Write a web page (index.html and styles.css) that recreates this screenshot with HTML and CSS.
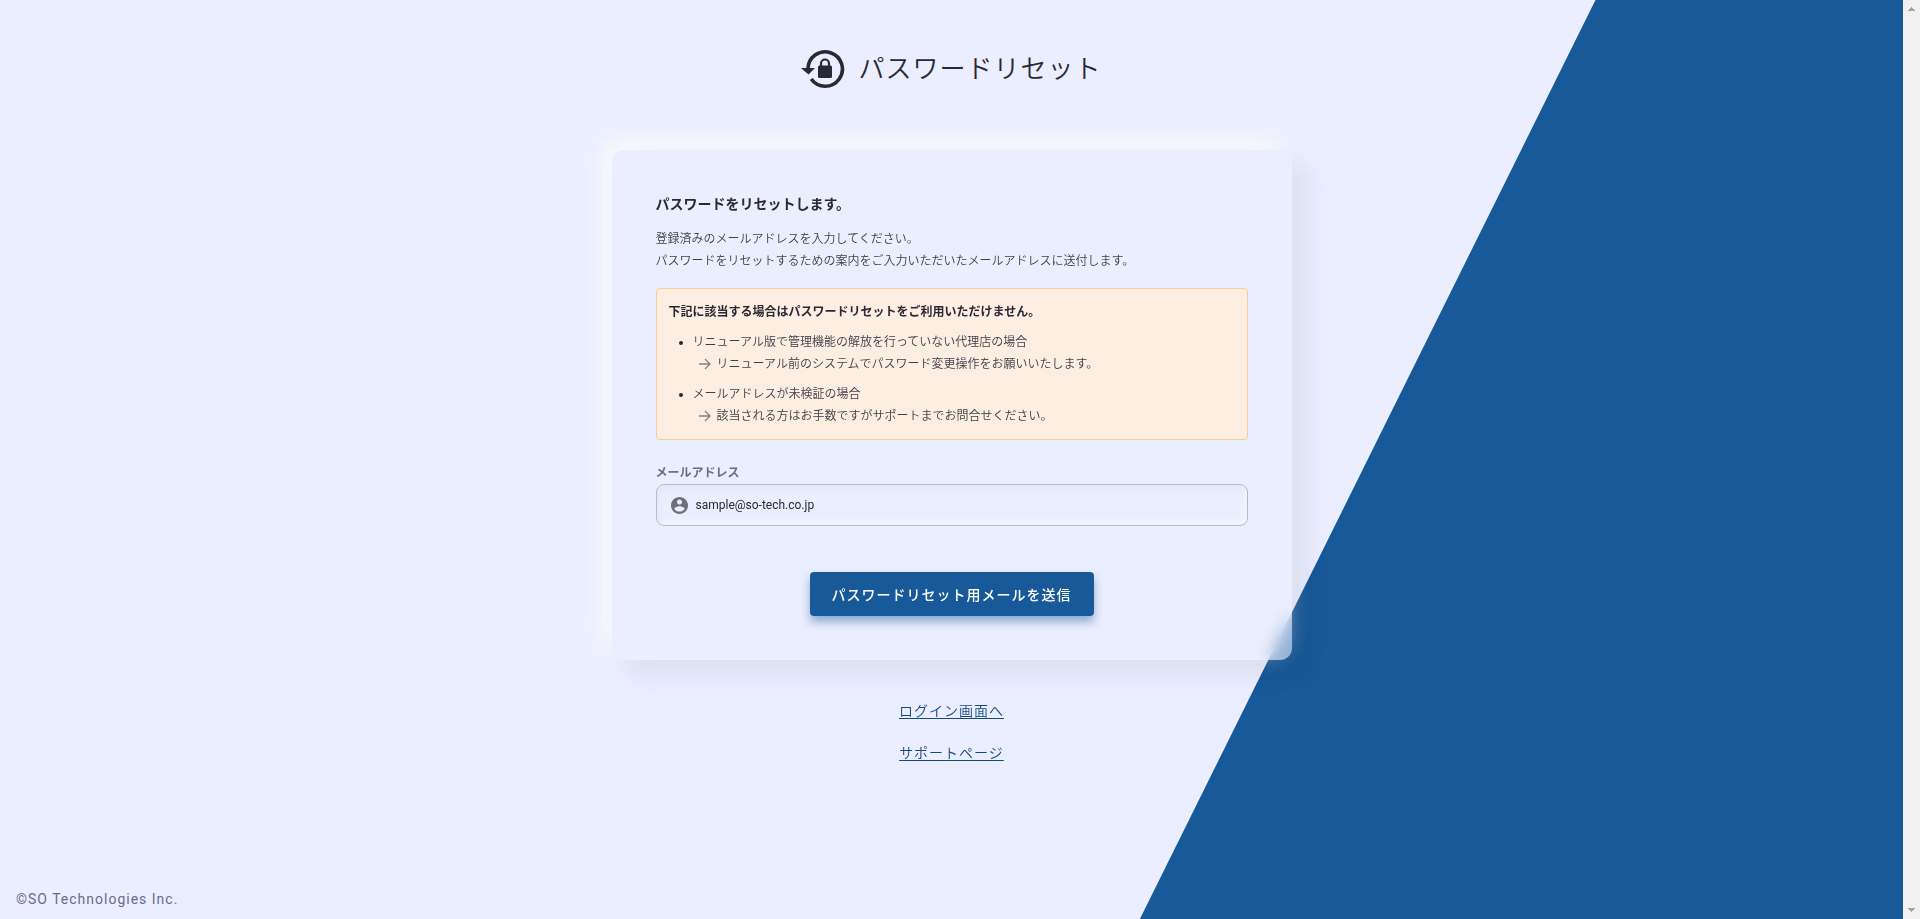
FILE: index.html
```html
<!DOCTYPE html>
<html lang="ja">
<head>
    <meta charset="UTF-8">
    <meta name="viewport" content="width=device-width, initial-scale=1.0">
    <title>パスワードリセット</title>
    <link rel="stylesheet" href="styles.css">
</head>
<body>
    <div class="page">
        <div class="page-bg"></div>
        <header class="page-header">
            <svg class="logo" viewBox="0 0 44 40" width="44" height="40" aria-hidden="true">
                <path d="M7 20a17.200 17.200 0 1 1 3.200 10" fill="none" stroke="#2a2833" stroke-width="3.600"/>
                <path d="M0 19h14l-6.500 6.500z" fill="#2a2833"/>
                <path d="M20 18v-3.500a4 4 0 0 1 8 0V18" fill="none" stroke="#2a2833" stroke-width="2.200"/>
                <rect x="17" y="16.500" width="14" height="12.500" rx="1.500" fill="#2a2833"/>
            </svg>
            <h1>パスワードリセット</h1>
        </header>

        <main class="card">
            <h2>パスワードをリセットします。</h2>
            <p class="lead">登録済みのメールアドレスを入力してください。<br>パスワードをリセットするための案内をご入力いただいたメールアドレスに送付します。</p>

            <div class="notice">
                <h3>下記に該当する場合はパスワードリセットをご利用いただけません。</h3>
                <ul>
                    <li>
                        リニューアル版で管理機能の解放を行っていない代理店の場合
                        <div class="answer">
                            <svg viewBox="0 0 12 12" width="12" height="12" aria-hidden="true"><path d="M0 6h10.500M6 1l5 5-5 5"/></svg>
                            リニューアル前のシステムでパスワード変更操作をお願いいたします。
                        </div>
                    </li>
                    <li>
                        メールアドレスが未検証の場合
                        <div class="answer">
                            <svg viewBox="0 0 12 12" width="12" height="12" aria-hidden="true"><path d="M0 6h10.500M6 1l5 5-5 5"/></svg>
                            該当される方はお手数ですがサポートまでお問合せください。
                        </div>
                    </li>
                </ul>
            </div>

            <form class="reset-form">
                <label for="email">メールアドレス</label>
                <div class="field">
                    <svg viewBox="2 2 20 20" width="17" height="17" aria-hidden="true">
                        <path fill="#6f7079" d="M12 2C6.480 2 2 6.480 2 12s4.480 10 10 10 10-4.480 10-10S17.520 2 12 2zm0 3c1.660 0 3 1.340 3 3s-1.340 3-3 3-3-1.340-3-3 1.340-3 3-3zm0 14.200c-2.500 0-4.710-1.280-6-3.220.030-1.990 4-3.080 6-3.080 1.990 0 5.970 1.090 6 3.080-1.290 1.940-3.500 3.220-6 3.220z"/>
                    </svg>
                    <input type="email" id="email" value="sample@so-tech.co.jp">
                </div>
                <button type="submit">パスワードリセット用メールを送信</button>
            </form>
        </main>

        <nav class="links">
            <a href="#">ログイン画面へ</a>
            <a href="#">サポートページ</a>
        </nav>

        <footer>©SO Technologies Inc.</footer>
    </div>

    <div class="scrollbar" aria-hidden="true">
        <svg viewBox="0 0 7 4" width="7" height="4"><path d="M3 0h1v1h1v1h1v1h1v1H0V3h1V2h1V1h1z"/></svg>
        <svg viewBox="0 0 7 4" width="7" height="4"><path d="M0 0h7v1H6v1H5v1H4v1H3V3H2V2H1V1H0z"/></svg>
    </div>
</body>
</html>
```
FILE: styles.css
```css
* {
    box-sizing: border-box;
}
body {
    display: flex;
    min-height: 100vh;
    margin: 0;
    font-family: Roboto, "Noto Sans CJK JP", sans-serif;
    font-size: 12px;
    font-weight: 350;
    line-height: 22px;
    color: #2a2833;
    background-color: #ebeefe;
}
h1, h2, h3, p, ul {
    margin: 0;
    padding: 0;
}
.page {
    position: relative;
    display: flex;
    flex-direction: column;
    align-items: center;
    flex: 1;
    padding: 49px 16px 9px;
}
/* blue slope on the right side */
.page-bg {
    position: absolute;
    inset: 0;
    background-color: #175999;
    clip-path: polygon(83.84% 0, 100% 0, 100% 100%, 59.9% 100%);
}
.page-header {
    position: relative;
    display: flex;
    align-items: center;
    gap: 13px;
    margin-bottom: 61px;
}
.page-header h1 {
    font-size: 26px;
    font-weight: 350;
    line-height: 40px;
    letter-spacing: 1px;
}
.card {
    position: relative;
    width: 100%;
    max-width: 680px;
    padding: 44px;
    border-radius: 12px;
    background-color: rgba(235, 238, 254, 0.6);
    backdrop-filter: blur(8px);
    box-shadow: 14px 14px 24px rgba(20, 30, 50, 0.08), -10px -10px 24px rgba(252, 252, 252, 0.9);
}
.card h2 {
    margin-bottom: 14px;
    font-size: 14px;
    font-weight: 700;
    line-height: 20px;
}
.lead {
    margin-bottom: 16px;
    color: #3f3e4c;
}
.notice {
    padding: 12px;
    border: 1px solid #f8cf9c;
    border-radius: 4px;
    background-color: #fcefe2;
}
.notice h3 {
    margin-bottom: 8px;
    font-size: 12px;
    font-weight: 700;
}
.notice ul {
    padding-left: 24px;
}
.notice li {
    color: #3f3e4c;
}
.notice li::marker {
    color: #2a2833;
}
.notice li + li {
    margin-top: 8px;
}
.answer {
    display: flex;
    align-items: center;
    gap: 6px;
    padding-left: 6px;
}
.answer svg {
    fill: none;
    stroke: #85807e;
    stroke-width: 1.3;
}
.reset-form {
    display: flex;
    flex-direction: column;
    margin-top: 22px;
}
.reset-form label {
    font-weight: 700;
    color: #6b6a8c;
}
.field {
    display: flex;
    align-items: center;
    gap: 8px;
    height: 42px;
    padding: 0 14px;
    border: 1px solid #b9bac8;
    border-radius: 8px;
    box-shadow: inset 2px 2px 6px rgba(174, 174, 192, 0.2), inset -2px -2px 6px rgba(255, 255, 255, 0.7);
}
.field input {
    flex: 1;
    padding: 0;
    border: none;
    outline: none;
    background: none;
    font: inherit;
    font-weight: 400;
    color: #2a2833;
}
.reset-form button {
    align-self: center;
    height: 44px;
    margin-top: 46px;
    padding: 0 22px;
    border: none;
    border-radius: 4px;
    background-color: #175999;
    box-shadow: 0 6px 10px rgba(23, 89, 153, 0.45);
    font-family: inherit;
    font-size: 14px;
    font-weight: 500;
    letter-spacing: 1px;
    color: #fff;
    cursor: pointer;
}
.links {
    position: relative;
    display: flex;
    flex-direction: column;
    align-items: center;
    gap: 20px;
    margin-top: 40px;
}
.links a {
    font-size: 14px;
    letter-spacing: 1px;
    text-underline-offset: 2px;
    color: #174a7c;
}
footer {
    align-self: flex-start;
    margin-top: auto;
    font-size: 14px;
    font-weight: 400;
    letter-spacing: 1px;
    color: #6b6a8c;
}
.scrollbar {
    display: flex;
    flex-direction: column;
    align-items: center;
    justify-content: space-between;
    width: 17px;
    padding: 7px 0;
    background-color: #f0f0f0;
}
.scrollbar svg {
    fill: #a3a3a3;
}
```
